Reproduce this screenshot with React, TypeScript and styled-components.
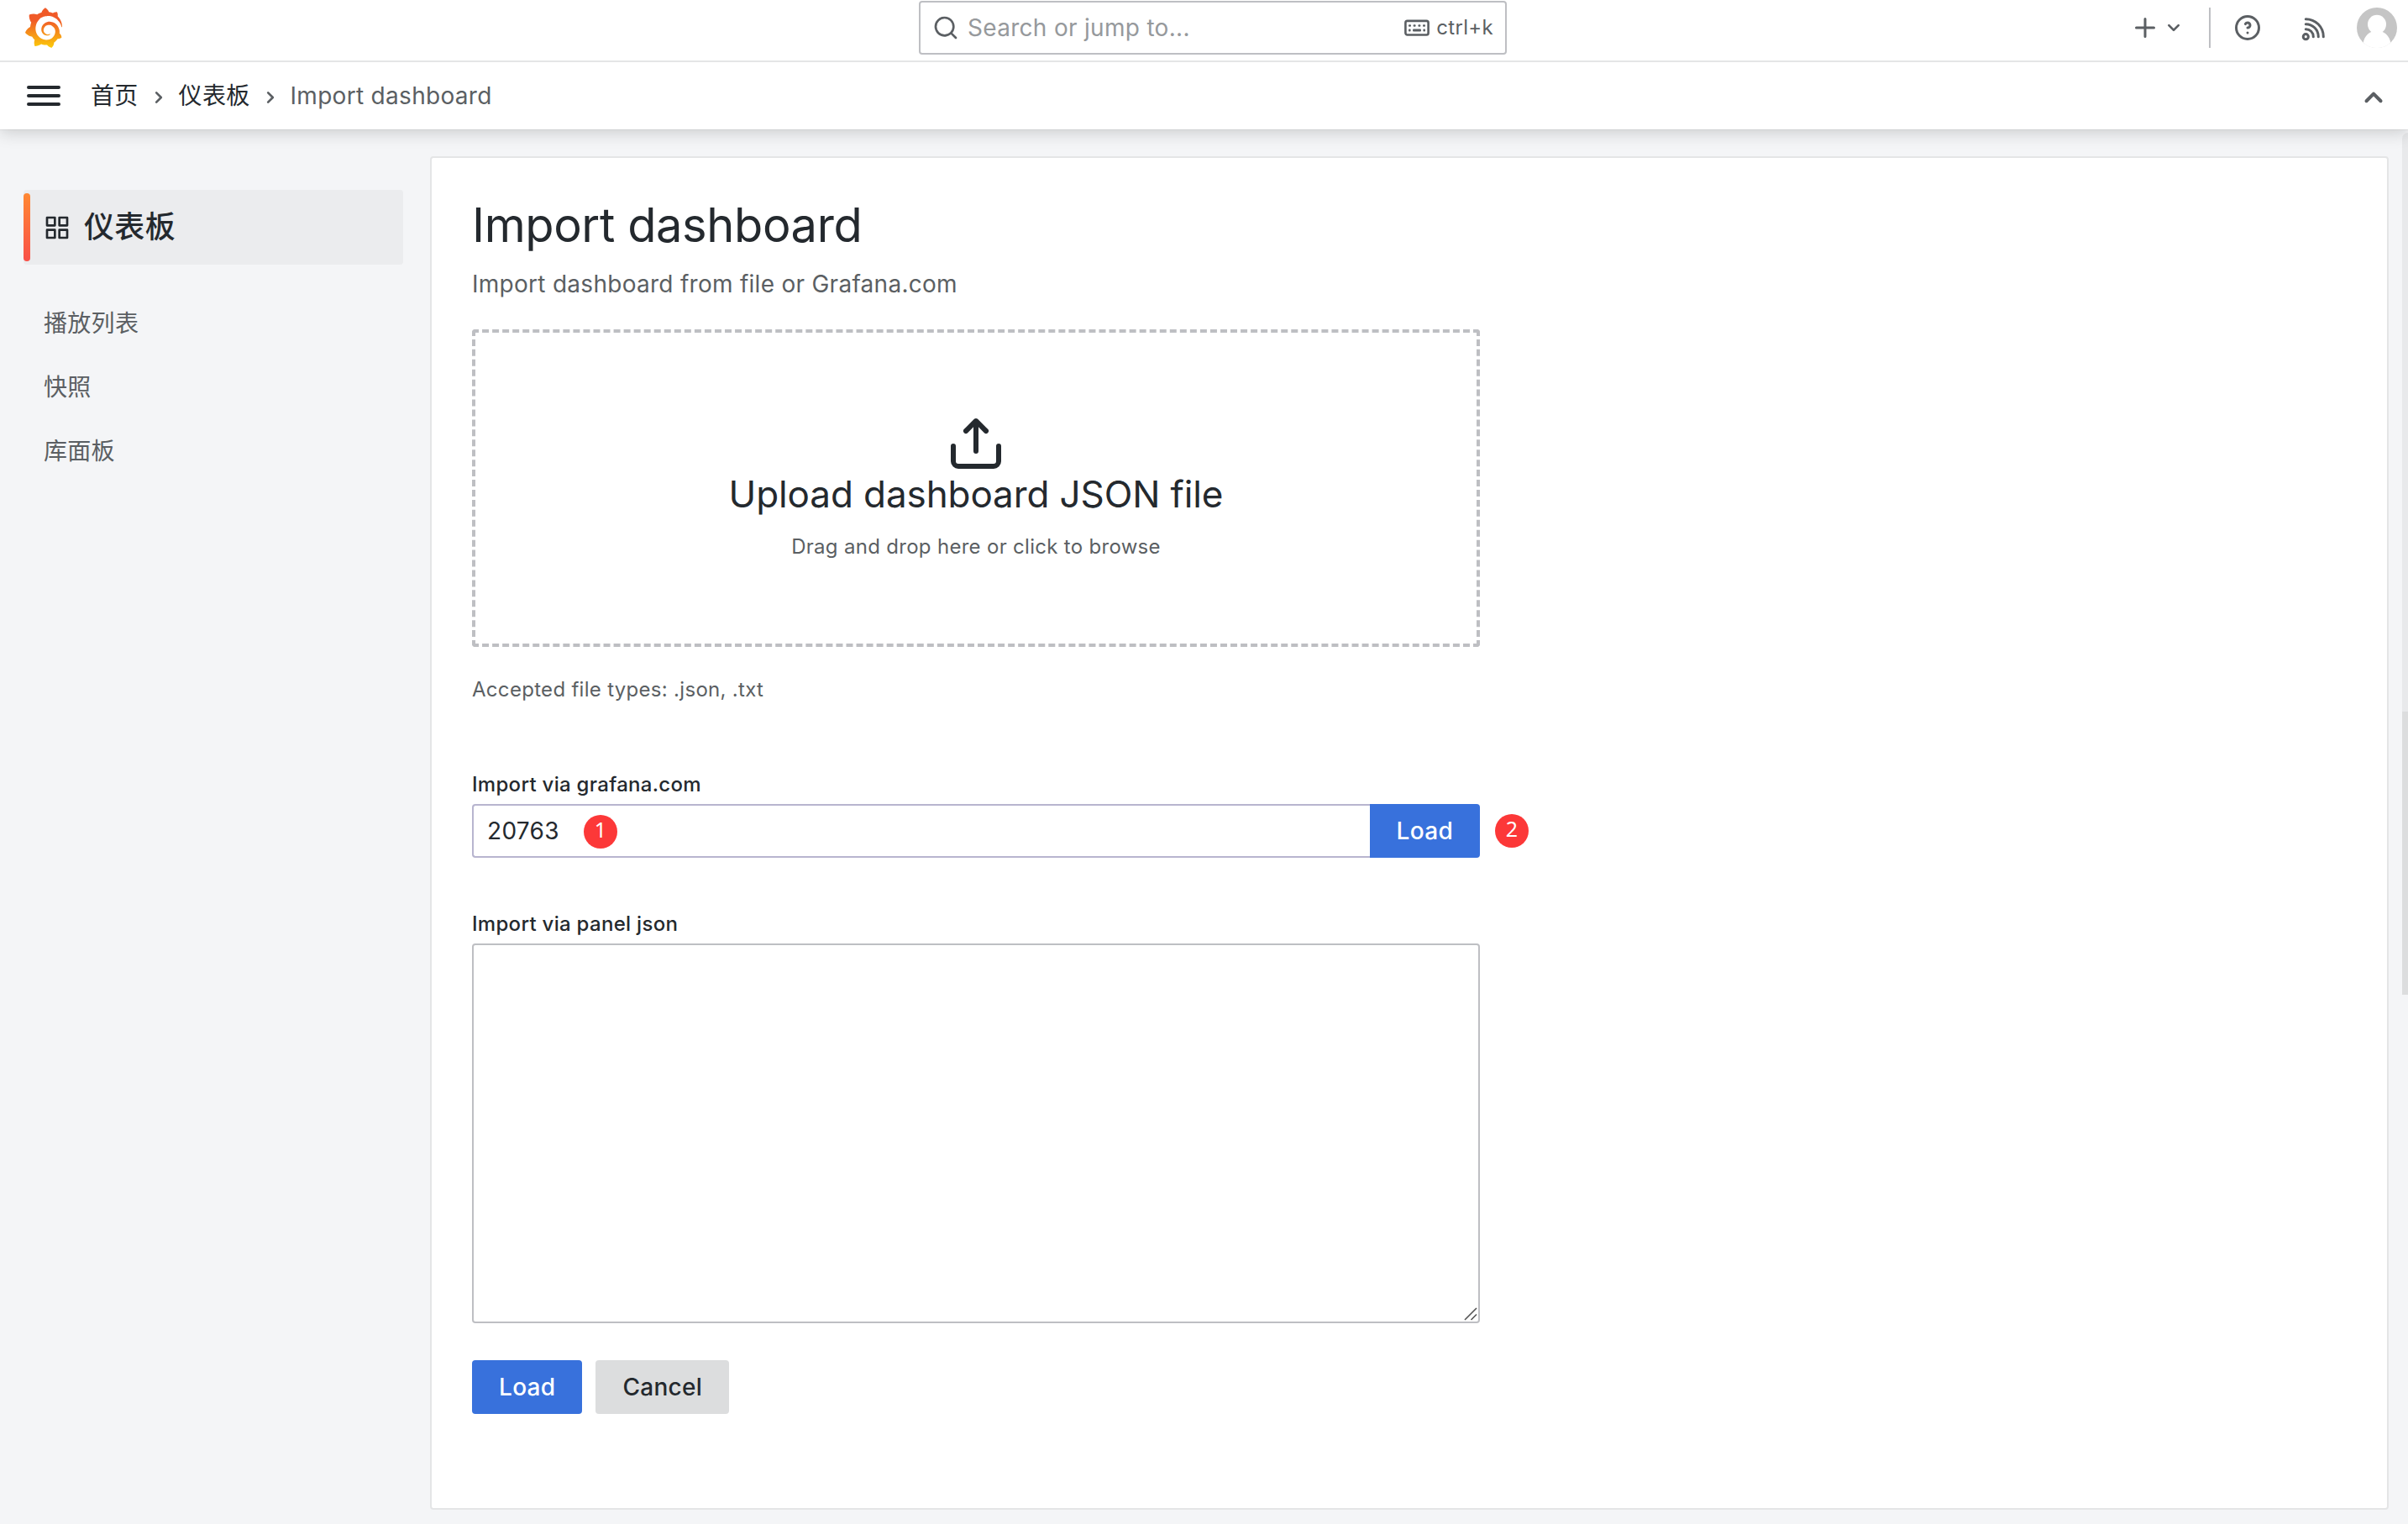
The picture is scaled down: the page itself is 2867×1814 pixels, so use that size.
import React from 'react';
import styled, { createGlobalStyle } from 'styled-components';

const color = {
  text: '#24292e',
  textSecondary: '#5b5f63',
  textDisabled: '#96999c',
  border: '#e4e5e6',
  borderStrong: '#bebfc3',
  canvas: '#f4f5f7',
  primary: '#3871dc',
};

const GlobalStyle = createGlobalStyle`
  *, *::before, *::after { box-sizing: border-box; }
  body {
    margin: 0;
    overflow: hidden;
    background: ${color.canvas};
    color: ${color.text};
    font-family: Inter, "Noto Sans CJK SC", sans-serif;
    font-size: 28px;
    line-height: 44px;
    letter-spacing: 0.01071em;
  }
  input, textarea, button { font: inherit; letter-spacing: inherit; color: inherit; }
`;

const Page = styled.div`
  display: flex;
  flex-direction: column;
  height: 1814px;
`;

const Header = styled.header`
  position: relative;
  z-index: 1;
  flex: none;
  background: #fff;
  box-shadow: 0 0 1px rgba(24, 26, 27, 0.3), 0 4px 18px rgba(24, 26, 27, 0.18);
`;

const TopBar = styled.div`
  display: grid;
  grid-template-columns: 1066px 700px 1fr;
  height: 74px;
  padding: 0 13px 0 28px;
  border-bottom: 2px solid ${color.border};
`;

const LogoCell = styled.div`
  padding-top: 9px;
  height: 72px;
`;

const SearchBox = styled.div`
  display: flex;
  align-items: center;
  height: 64px;
  margin-top: 1px;
  padding: 0 14px;
  border: 2px solid ${color.borderStrong};
  border-radius: 4px;
  color: ${color.textSecondary};
`;

const Placeholder = styled.span`
  flex: 1;
  margin-left: 10px;
  color: ${color.textDisabled};
`;

const Shortcut = styled.span`
  display: flex;
  align-items: center;
  gap: 7px;
  font-size: 24px;
`;

const Actions = styled.div`
  display: flex;
  align-items: center;
  justify-content: flex-end;
  height: 66px;
  color: ${color.textSecondary};
`;

const AddButton = styled.div`
  display: flex;
  align-items: center;
  margin-right: 26px;
`;

const Divider = styled.span`
  width: 2px;
  height: 48px;
  margin-right: 26px;
  background: ${color.borderStrong};
`;

const ActionIcon = styled.span<{ $gap: number }>`
  display: flex;
  margin-right: ${(p) => p.$gap}px;
`;

const NavBar = styled.div`
  display: flex;
  align-items: center;
  height: 80px;
  padding: 0 17px 0 28px;
`;

const Crumbs = styled.nav`
  display: flex;
  align-items: center;
  flex: 1;
  gap: 8px;
  margin-left: 32px;
  color: ${color.textSecondary};
`;

const Crumb = styled.a`
  color: ${color.text};
`;

const CrumbIcon = styled.span`
  display: flex;
  padding-top: 4px;
  color: ${color.textSecondary};
`;

const Body = styled.div`
  display: flex;
  flex: 1;
  min-height: 0;
`;

const Sidebar = styled.aside`
  flex: none;
  width: 512px;
  padding: 72px 32px 0 28px;
`;

const SectionTitle = styled.div`
  display: flex;
  align-items: center;
  height: 89px;
  margin-bottom: 32px;
  border-radius: 4px;
  background: #ebecee;
  font-size: 36px;
  font-weight: 500;
  letter-spacing: 0.01em;
`;

const ActiveMark = styled.span`
  width: 8px;
  height: 81px;
  margin-right: 16px;
  border-radius: 4px;
  background: linear-gradient(#ff8833, #f95048);
`;

const SectionText = styled.span`
  margin-left: 16px;
  padding-bottom: 2px;
`;

const NavLink = styled.a`
  display: flex;
  align-items: center;
  height: 76px;
  padding-left: 24px;
  color: ${color.textSecondary};
`;

const Main = styled.main`
  flex: none;
  width: 2332px;
  height: 1611px;
  margin-top: 32px;
  padding: 48px 48px 0;
  border: 2px solid ${color.border};
  border-radius: 4px;
  background: #fff;
`;

const ScrollTrack = styled.div`
  width: 7px;
  height: 690px;
  margin: 4px 0 0 auto;
  border-top-left-radius: 7px;
  background: #e8e9eb;
`;

const ScrollThumb = styled.div`
  width: 7px;
  height: 337px;
  margin-top: 689px;
  background: #dcddde;
`;

const Title = styled.h1`
  margin: 0;
  font-size: 56px;
  font-weight: 400;
  line-height: 64px;
  letter-spacing: -0.4px;
`;

const Subtitle = styled.p`
  margin: 16px 0 32px;
  color: ${color.textSecondary};
  letter-spacing: 0.0098em;
`;

const Form = styled.div`
  width: 1200px;
`;

const Dropzone = styled.div`
  display: flex;
  flex-direction: column;
  align-items: center;
  height: 378px;
  padding-top: 96px;
  border: 4px dashed ${color.borderStrong};
  border-radius: 4px;
`;

const DropTitle = styled.div`
  font-size: 44px;
  line-height: 48px;
  letter-spacing: -0.1px;
`;

const Hint = styled.div<{ $top: number }>`
  margin-top: ${(p) => p.$top}px;
  color: ${color.textSecondary};
  font-size: 24px;
  line-height: 36px;
`;

const Label = styled.label<{ $top: number }>`
  display: block;
  margin-top: ${(p) => p.$top}px;
  margin-bottom: 8px;
  font-size: 24px;
  font-weight: 500;
  line-height: 30px;
`;

const InputRow = styled.div`
  display: flex;
  align-items: center;
  position: relative;
`;

const Field = styled.div`
  display: flex;
  align-items: center;
  flex: 1;
  height: 64px;
  padding-left: 16px;
  border: 2px solid #b8b5cf;
  border-right: 0;
  border-radius: 4px 0 0 4px;
`;

const FieldValue = styled.span`
  width: 115px;
`;

const Marker = styled.span`
  display: flex;
  align-items: center;
  justify-content: center;
  width: 40px;
  height: 40px;
  padding-bottom: 6px;
  border-radius: 50%;
  background: #fc3838;
  color: #fff;
  font-family: "Noto Sans", sans-serif;
  font-size: 25px;
  letter-spacing: 0;

  ${Field} & {
    margin-top: 2px;
  }
`;

const OuterMarker = styled.div`
  position: absolute;
  left: 1218px;
  top: 12px;
`;

const Button = styled.button<{ $variant?: 'secondary'; $attached?: boolean }>`
  height: 64px;
  padding: 0 32px;
  border: 0;
  border-radius: ${(p) => (p.$attached ? '0 4px 4px 0' : '4px')};
  background: ${(p) => (p.$variant === 'secondary' ? '#dcddde' : color.primary)};
  color: ${(p) => (p.$variant === 'secondary' ? color.text : '#fff')};
  font-weight: 500;
`;

const AreaWrap = styled.div`
  position: relative;
  height: 452px;
`;

const Area = styled.textarea`
  display: block;
  width: 100%;
  height: 100%;
  padding: 8px 16px;
  border: 2px solid ${color.borderStrong};
  border-radius: 4px;
  background: #fff;
  outline: none;
  resize: none;
`;

const Grip = styled.svg`
  position: absolute;
  right: 3px;
  bottom: 3px;
`;

const ButtonRow = styled.div`
  display: flex;
  gap: 16px;
  margin-top: 44px;
`;

const PATHS = {
  search:
    'M21.71,20.29,18,16.61A9,9,0,1,0,16.61,18l3.68,3.68a1,1,0,0,0,1.42,0A1,1,0,0,0,21.71,20.29ZM11,18a7,7,0,1,1,7-7A7,7,0,0,1,11,18Z',
  plus: 'M19,11H13V5a1,1,0,0,0-2,0v6H5a1,1,0,0,0,0,2h6v6a1,1,0,0,0,2,0V13h6a1,1,0,0,0,0-2Z',
  down: 'M17,9.17a1,1,0,0,0-1.41,0L12,12.71,8.46,9.17a1,1,0,0,0-1.41,0,1,1,0,0,0,0,1.42l4.24,4.24a1,1,0,0,0,1.42,0L17,10.59A1,1,0,0,0,17,9.17Z',
  up: 'M17,13.41,12.71,9.17a1,1,0,0,0-1.42,0L7.05,13.41a1,1,0,0,0,0,1.42,1,1,0,0,0,1.41,0L12,11.29l3.54,3.54a1,1,0,0,0,.7.29,1,1,0,0,0,.71-.29A1,1,0,0,0,17,13.41Z',
  right:
    'M14.83,11.29,10.59,7.05a1,1,0,0,0-1.42,0,1,1,0,0,0,0,1.41L12.71,12,9.17,15.54a1,1,0,0,0,0,1.41,1,1,0,0,0,.71.29,1,1,0,0,0,.71-.29l4.24-4.24A1,1,0,0,0,14.83,11.29Z',
  help: 'M11.29,15.29a1.58,1.58,0,0,0-.12.15.76.76,0,0,0-.09.18.64.64,0,0,0-.06.18,1.36,1.36,0,0,0,0,.2.84.84,0,0,0,.08.38.9.9,0,0,0,.54.54.94.94,0,0,0,.76,0,.9.9,0,0,0,.54-.54A1,1,0,0,0,13,16a1,1,0,0,0-.29-.71A1,1,0,0,0,11.29,15.29ZM12,2A10,10,0,1,0,22,12,10,10,0,0,0,12,2Zm0,18a8,8,0,1,1,8-8A8,8,0,0,1,12,20ZM12,7A3,3,0,0,0,9.4,8.5a1,1,0,1,0,1.73,1A1,1,0,0,1,12,9a1,1,0,0,1,0,2,1,1,0,1,0,0,2,3,3,0,0,0,0-6Z',
  menu: 'M3,8H21a1,1,0,0,0,0-2H3A1,1,0,0,0,3,8Zm18,8H3a1,1,0,0,0,0,2H21a1,1,0,0,0,0-2Zm0-5H3a1,1,0,0,0,0,2H21a1,1,0,0,0,0-2Z',
  apps: 'M10,13H3a1,1,0,0,0-1,1v7a1,1,0,0,0,1,1h7a1,1,0,0,0,1-1V14A1,1,0,0,0,10,13ZM9,20H4V15H9ZM21,2H14a1,1,0,0,0-1,1v7a1,1,0,0,0,1,1h7a1,1,0,0,0,1-1V3A1,1,0,0,0,21,2ZM20,9H15V4h5Zm1,4H14a1,1,0,0,0-1,1v7a1,1,0,0,0,1,1h7a1,1,0,0,0,1-1V14A1,1,0,0,0,21,13Zm-1,7H15V15h5ZM10,2H3A1,1,0,0,0,2,3v7a1,1,0,0,0,1,1h7a1,1,0,0,0,1-1V3A1,1,0,0,0,10,2ZM9,9H4V4H9Z',
  upload:
    'M8.71,7.71,11,5.41V15a1,1,0,0,0,2,0V5.41l2.29,2.3a1,1,0,0,0,1.42,0,1,1,0,0,0,0-1.42l-4-4a1,1,0,0,0-.33-.21,1,1,0,0,0-.76,0,1,1,0,0,0-.33.21l-4,4A1,1,0,1,0,8.71,7.71ZM21,12a1,1,0,0,0-1,1v6a1,1,0,0,1-1,1H5a1,1,0,0,1-1-1V13a1,1,0,0,0-2,0v6a3,3,0,0,0,3,3H19a3,3,0,0,0,3-3V13A1,1,0,0,0,21,12Z',
};

const Glyph = styled.svg`
  flex: none;
  fill: currentColor;
`;

const Icon = ({ name, size }: { name: keyof typeof PATHS; size: number }) => (
  <Glyph width={size} height={size} viewBox="0 0 24 24">
    <path d={PATHS[name]} />
  </Glyph>
);

const KeyboardIcon = () => (
  <svg width="32" height="32" viewBox="0 0 32 32" fill="none">
    <rect x="2.4" y="7.9" width="27.2" height="16.6" rx="2.2" stroke="currentColor" strokeWidth="2.6" />
    <g fill="currentColor">
      <rect x="6" y="12.2" width="3" height="2.6" rx="1" />
      <rect x="11.6" y="12.2" width="3" height="2.6" rx="1" />
      <rect x="17.4" y="12.2" width="3" height="2.6" rx="1" />
      <rect x="23" y="12.2" width="3" height="2.6" rx="1" />
      <rect x="6" y="17.6" width="2.6" height="2.8" rx="1" />
      <rect x="11" y="17.6" width="10" height="2.8" rx="1" />
      <rect x="23.4" y="17.6" width="2.6" height="2.8" rx="1" />
    </g>
  </svg>
);

const RssIcon = () => (
  <svg width="36" height="36" viewBox="0 0 24 24" fill="none" stroke="currentColor" strokeWidth="2" strokeLinecap="round">
    <circle cx="6.2" cy="19.1" r="2.05" />
    <path d="M6.2 5.1a14 14 0 0 1 14 14M6.2 9.1a10 10 0 0 1 10 10M6.2 13.1a6 6 0 0 1 6 6" />
  </svg>
);

const Avatar = () => (
  <svg width="48" height="48" viewBox="0 0 48 48">
    <defs>
      <clipPath id="avatar">
        <circle cx="24" cy="24" r="24" />
      </clipPath>
    </defs>
    <g clipPath="url(#avatar)">
      <rect width="48" height="48" fill="#c5c5c5" />
      <ellipse cx="24" cy="20" rx="11" ry="11.2" fill="#fff" />
      <path d="M7.5 42.5C9 34 15 27.5 24 27.5S39 34 40.5 42.5V48H7.5Z" fill="#fff" />
      <rect y="43.3" width="48" height="5" fill="#fff" />
    </g>
  </svg>
);

const Logo = () => (
  <svg width="48" height="48" viewBox="0 0 351 365">
    <defs>
      <linearGradient id="flame" gradientUnits="userSpaceOnUse" x1="175.5" y1="445.5" x2="175.5" y2="114">
        <stop offset="0" stopColor="#FFF100" />
        <stop offset="1" stopColor="#F05A28" />
      </linearGradient>
    </defs>
    <path
      fill="url(#flame)"
      d="M342,161.2c-0.6-6.1-1.6-13.1-3.6-20.9c-2-7.7-5-16.2-9.4-25c-4.4-8.8-10.1-17.9-17.5-26.8c-2.9-3.5-6.1-6.9-9.5-10.2c5.1-20.3-6.2-37.9-6.2-37.9c-19.5-1.2-31.9,6.1-36.5,9.4c-0.8-0.3-1.5-0.7-2.3-1c-3.3-1.3-6.7-2.6-10.3-3.7c-3.5-1.1-7.1-2.1-10.8-3c-3.7-0.9-7.4-1.6-11.2-2.2c-0.7-0.1-1.3-0.2-2-0.3c-8.5-27.2-32.9-38.6-32.9-38.6c-27.3,17.3-32.4,41.5-32.4,41.5s-0.1,0.5-0.3,1.4c-1.5,0.4-3,0.9-4.5,1.3c-2.1,0.6-4.2,1.4-6.2,2.2c-2.1,0.8-4.1,1.6-6.2,2.5c-4.1,1.8-8.2,3.8-12.2,6c-3.9,2.2-7.7,4.6-11.4,7.1c-0.5-0.2-1-0.4-1-0.4c-37.8-14.4-71.3,2.9-71.3,2.9c-3.1,40.2,15.1,65.5,18.7,70.1c-0.9,2.5-1.7,5-2.5,7.5c-2.8,9.1-4.9,18.4-6.2,28.1c-0.2,1.4-0.4,2.8-0.5,4.2C18.8,192.7,8.5,228,8.5,228c29.1,33.5,63.1,35.6,63.1,35.6c0,0,0.1-0.1,0.1-0.1c4.3,7.7,9.3,15,14.9,21.9c2.4,2.9,4.8,5.6,7.4,8.3c-10.6,30.4,1.5,55.6,1.5,55.6c32.4,1.2,53.7-14.2,58.2-17.7c3.2,1.1,6.5,2.1,9.8,2.9c10,2.6,20.2,4.1,30.4,4.5c2.5,0.1,5.1,0.2,7.6,0.1l1.2,0l0.8,0l1.6,0l1.6-0.1l0,0.1c15.3,21.8,42.1,24.9,42.1,24.9c19.1-20.1,20.2-40.1,20.2-44.4l0,0c0,0,0-0.1,0-0.3c0-0.4,0-0.6,0-0.6l0,0c0-0.3,0-0.6,0-0.9c4-2.8,7.8-5.8,11.4-9.1c7.6-6.9,14.3-14.8,19.9-23.3c0.5-0.8,1-1.6,1.5-2.4c21.6,1.2,36.9-13.4,36.9-13.4c-3.6-22.5-16.4-33.5-19.1-35.6l0,0c0,0-0.1-0.1-0.3-0.2c-0.2-0.1-0.2-0.2-0.2-0.2c-0.1-0.1-0.3-0.2-0.5-0.3c0.1-1.4,0.2-2.7,0.3-4.1c0.2-2.4,0.2-4.9,0.2-7.3l0-1.8l0-0.9l0-0.5c0-0.6,0-0.4,0-0.6l-0.1-1.5l-0.1-2c0-0.7-0.1-1.3-0.2-1.9c-0.1-0.6-0.1-1.3-0.2-1.9l-0.2-1.9l-0.3-1.9c-0.4-2.5-0.8-4.9-1.4-7.4c-2.3-9.7-6.1-18.9-11-27.2c-5-8.3-11.2-15.6-18.3-21.8c-7-6.2-14.9-11.2-23.1-14.9c-8.3-3.7-16.9-6.1-25.5-7.2c-4.3-0.6-8.6-0.8-12.9-0.7l-1.6,0l-0.4,0c-0.1,0-0.6,0-0.5,0l-0.7,0l-1.6,0.1c-0.6,0-1.2,0.1-1.7,0.1c-2.2,0.2-4.4,0.5-6.5,0.9c-8.6,1.6-16.7,4.7-23.8,9c-7.1,4.3-13.3,9.6-18.3,15.6c-5,6-8.9,12.7-11.6,19.6c-2.7,6.9-4.2,14.1-4.6,21c-0.1,1.7-0.1,3.5-0.1,5.2c0,0.4,0,0.9,0,1.3l0.1,1.4c0.1,0.8,0.1,1.7,0.2,2.5c0.3,3.5,1,6.9,1.9,10.1c1.9,6.5,4.9,12.4,8.6,17.4c3.7,5,8.2,9.1,12.9,12.4c4.7,3.2,9.8,5.5,14.8,7c5,1.5,10,2.1,14.7,2.1c0.6,0,1.2,0,1.7,0c0.3,0,0.6,0,0.9,0c0.3,0,0.6,0,0.9-0.1c0.5,0,1-0.1,1.5-0.1c0.1,0,0.3,0,0.4-0.1l0.5-0.1c0.3,0,0.6-0.1,0.9-0.1c0.6-0.1,1.1-0.2,1.7-0.3c0.6-0.1,1.1-0.2,1.6-0.4c1.1-0.2,2.1-0.6,3.1-0.9c2-0.7,4-1.5,5.7-2.4c1.8-0.9,3.4-2,5-3c0.4-0.3,0.9-0.6,1.3-1c1.6-1.3,1.9-3.7,0.6-5.3c-1.1-1.4-3.1-1.8-4.7-0.9c-0.4,0.2-0.8,0.4-1.2,0.6c-1.4,0.7-2.8,1.3-4.3,1.8c-1.5,0.5-3.1,0.9-4.7,1.2c-0.8,0.1-1.6,0.2-2.5,0.3c-0.4,0-0.8,0.1-1.3,0.1c-0.4,0-0.9,0-1.2,0c-0.4,0-0.8,0-1.2,0c-0.5,0-1,0-1.5-0.1l-0.3,0l-0.3,0c-0.2,0-0.5,0-0.7-0.1c-0.5-0.1-0.9-0.1-1.4-0.2c-3.7-0.5-7.4-1.6-10.9-3.2c-3.6-1.6-7-3.8-10.1-6.6c-3.1-2.8-5.8-6.1-7.9-9.9c-2.1-3.8-3.6-8-4.3-12.4c-0.3-2.2-0.5-4.5-0.4-6.7c0-0.6,0.1-1.2,0.1-1.8l0-0.3l0-0.5c0-0.3,0.1-0.6,0.1-0.9c0.1-1.2,0.3-2.4,0.5-3.6c1.7-9.6,6.5-19,13.9-26.1c1.9-1.8,3.9-3.4,6-4.9c2.1-1.5,4.4-2.8,6.8-3.9c2.4-1.1,4.8-2,7.4-2.7c2.5-0.7,5.1-1.1,7.8-1.4c1.3-0.1,2.6-0.2,4-0.2c0.4,0,0.6,0,0.9,0l1.1,0l0.7,0l0.4,0l1.1,0.1c2.9,0.2,5.7,0.6,8.5,1.3c5.6,1.2,11.1,3.3,16.2,6.1c10.2,5.7,18.9,14.5,24.2,25.1c2.7,5.3,4.6,11,5.5,16.9c0.2,1.5,0.4,3,0.5,4.5l0.1,1.1l0.1,1.1c0,0.4,0,0.8,0,1.1c0,0.4,0,0.8,0,1.1l0,1l0,1.1c0,0.7-0.1,1.9-0.1,2.6c-0.1,1.6-0.3,3.3-0.5,4.9c-0.2,1.6-0.5,3.2-0.8,4.8c-0.3,1.6-0.7,3.2-1.1,4.7c-0.8,3.1-1.8,6.2-3,9.3c-2.4,6-5.6,11.8-9.4,17.1c-7.7,10.6-18.2,19.2-30.2,24.7c-6,2.7-12.3,4.7-18.8,5.7c-3.2,0.6-6.5,0.9-9.8,1l-0.6,0l-0.5,0l-1.1,0l-1.6,0l-0.8,0l-0.4,0c-1.8,0-3.5-0.1-5.3-0.3c-7-0.5-13.9-1.8-20.7-3.7c-6.7-1.9-13.2-4.6-19.4-7.8c-12.3-6.6-23.4-15.6-32-26.5c-4.3-5.4-8.1-11.3-11.2-17.4c-3.1-6.1-5.6-12.6-7.4-19.1c-1.8-6.6-2.9-13.3-3.4-20.1l-0.1-1.3l0-0.3l0-0.3l0-0.6l0-1.1l0-0.3l0-0.4l0-0.8l0-1.6l0-0.4l0-0.6c0-0.8,0-1.7,0-2.5c0.1-3.3,0.4-6.8,0.8-10.2c0.4-3.4,1-6.9,1.7-10.3c0.7-3.4,1.5-6.8,2.5-10.2c1.9-6.7,4.3-13.2,7.1-19.3c5.7-12.2,13.1-23.1,22-31.8c2.2-2.2,4.5-4.2,6.9-6.2c2.4-1.9,4.9-3.7,7.5-5.4c2.5-1.7,5.2-3.2,7.9-4.6c1.3-0.7,2.7-1.4,4.1-2c0.7-0.3,1.4-0.6,2.1-0.9c0.7-0.3,1.4-0.6,2.1-0.9c2.8-1.2,5.7-2.2,8.7-3.1c0.7-0.2,1.5-0.4,2.2-0.7c0.7-0.2,1.5-0.4,2.2-0.6c1.5-0.4,3-0.8,4.5-1.1c0.7-0.2,1.5-0.3,2.3-0.5c0.8-0.2,1.5-0.3,2.3-0.5c0.8-0.1,1.5-0.3,2.3-0.4l1.1-0.2l1.2-0.2c0.8-0.1,1.5-0.2,2.3-0.3c0.9-0.1,1.7-0.2,2.6-0.3c0.7-0.1,1.9-0.2,2.6-0.3c0.5-0.1,1.1-0.1,1.6-0.2l1.1-0.1l0.5-0.1l0.6,0c0.9-0.1,1.7-0.1,2.6-0.2l1.3-0.1l0.4,0l0.6,0c0.7,0,1.5-0.1,2.2-0.1c2.9-0.1,5.9-0.1,8.8,0c5.8,0.2,11.5,0.9,17,1.9c11.1,2.1,21.5,5.6,31,10.3c9.5,4.6,17.9,10.3,25.3,16.5c0.5,0.4,0.9,0.8,1.4,1.2c0.4,0.4,0.9,0.8,1.3,1.2c0.9,0.8,1.7,1.6,2.6,2.4c0.9,0.8,1.7,1.6,2.5,2.4c0.8,0.8,1.6,1.6,2.4,2.5c3.1,3.3,6,6.6,8.6,10c5.2,6.7,9.4,13.5,12.7,19.9c0.2,0.4,0.4,0.8,0.6,1.2c0.2,0.4,0.4,0.8,0.6,1.2c0.4,0.8,0.8,1.6,1.1,2.4c0.4,0.8,0.7,1.5,1.1,2.3c0.3,0.8,0.7,1.5,1,2.3c1.2,3,2.4,5.9,3.3,8.6c1.5,4.4,2.6,8.3,3.5,11.7c0.3,1.4,1.6,2.3,3,2.1c1.5-0.1,2.6-1.3,2.6-2.8C342.6,170.4,342.5,166.1,342,161.2z"
    />
  </svg>
);

export default function App() {
  return (
    <>
      <GlobalStyle />
      <Page>
        <Header>
          <TopBar>
            <LogoCell>
              <Logo />
            </LogoCell>
            <SearchBox>
              <Icon name="search" size={32} />
              <Placeholder>Search or jump to...</Placeholder>
              <Shortcut>
                <KeyboardIcon />
                ctrl+k
              </Shortcut>
            </SearchBox>
            <Actions>
              <AddButton>
                <Icon name="plus" size={36} />
                <Icon name="down" size={32} />
              </AddButton>
              <Divider />
              <ActionIcon $gap={42}>
                <Icon name="help" size={36} />
              </ActionIcon>
              <ActionIcon $gap={34}>
                <RssIcon />
              </ActionIcon>
              <Avatar />
            </Actions>
          </TopBar>
          <NavBar>
            <Icon name="menu" size={48} />
            <Crumbs>
              <Crumb>首页</Crumb>
              <CrumbIcon>
                <Icon name="right" size={32} />
              </CrumbIcon>
              <Crumb>仪表板</Crumb>
              <CrumbIcon>
                <Icon name="right" size={32} />
              </CrumbIcon>
              <span>Import dashboard</span>
            </Crumbs>
            <CrumbIcon>
              <Icon name="up" size={48} />
            </CrumbIcon>
          </NavBar>
        </Header>
        <Body>
          <Sidebar>
            <SectionTitle>
              <ActiveMark />
              <Icon name="apps" size={32} />
              <SectionText>仪表板</SectionText>
            </SectionTitle>
            <NavLink>播放列表</NavLink>
            <NavLink>快照</NavLink>
            <NavLink>库面板</NavLink>
          </Sidebar>
          <Main>
            <Title>Import dashboard</Title>
            <Subtitle>Import dashboard from file or Grafana.com</Subtitle>
            <Form>
              <Dropzone>
                <Icon name="upload" size={72} />
                <DropTitle>Upload dashboard JSON file</DropTitle>
                <Hint $top={21}>Drag and drop here or click to browse</Hint>
              </Dropzone>
              <Hint $top={33}>Accepted file types: .json, .txt</Hint>
              <Label $top={80}>Import via grafana.com</Label>
              <InputRow>
                <Field>
                  <FieldValue>20763</FieldValue>
                  <Marker>1</Marker>
                </Field>
                <Button $attached>Load</Button>
                <OuterMarker>
                  <Marker>2</Marker>
                </OuterMarker>
              </InputRow>
              <Label $top={64}>Import via panel json</Label>
              <AreaWrap>
                <Area />
                <Grip width="16" height="16" viewBox="0 0 16 16" stroke="#555" strokeWidth="1.6">
                  <path d="M1 15 15 1M8.5 15 15 8.5" />
                </Grip>
              </AreaWrap>
              <ButtonRow>
                <Button>Load</Button>
                <Button $variant="secondary">Cancel</Button>
              </ButtonRow>
            </Form>
          </Main>
          <ScrollTrack>
            <ScrollThumb />
          </ScrollTrack>
        </Body>
      </Page>
    </>
  );
}
